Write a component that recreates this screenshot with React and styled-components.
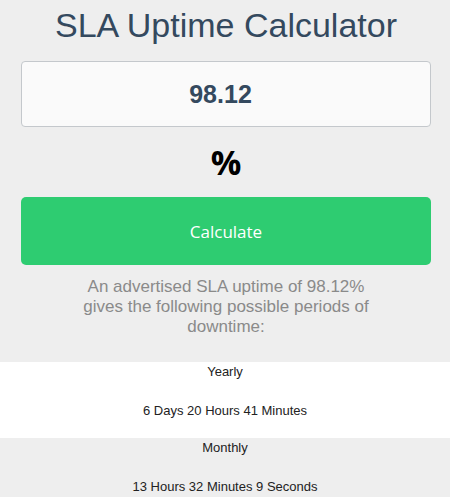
import styled, { createGlobalStyle } from "styled-components";

const GlobalStyle = createGlobalStyle`
  html, body {
    margin: 0;
    padding: 0;
    background-color: #eeeeee;
  }
  body {
    font-family: "Liberation Sans", Arial, sans-serif;
  }
`;

const Page = styled.div`
  min-height: 100vh;
  background-color: #eeeeee;
`;

const Form = styled.div`
  padding: 0 19px 0 21px;
  text-align: center;
`;

const Title = styled.h1`
  margin: 0;
  padding-top: 3px;
  font-size: 34px;
  font-weight: normal;
  line-height: 45px;
  color: #34495e;
`;

const Input = styled.div`
  margin-top: 13px;
  height: 64px;
  padding-right: 11px;
  border: 1px solid #c4c8cc;
  border-radius: 4px;
  background-color: #fafafa;
  display: flex;
  align-items: center;
  justify-content: center;
  font-size: 25px;
  font-weight: bold;
  color: #34495e;
`;

const Percent = styled.div`
  margin-top: 15px;
  font-family: "Open Sans", sans-serif;
  font-size: 34px;
  font-weight: bold;
  line-height: 40px;
  color: #000;
`;

const Button = styled.button`
  margin-top: 15px;
  width: 100%;
  height: 68px;
  border: none;
  border-radius: 5px;
  background-color: #2ecc71;
  color: #fff;
  font-family: "Open Sans", sans-serif;
  font-size: 17px;
  cursor: pointer;
`;

const Summary = styled.p`
  margin: 12px auto 0;
  max-width: 300px;
  font-size: 17px;
  line-height: 20px;
  color: #8a8a8a;
`;

const Results = styled.div`
  margin-top: 25px;
`;

const Period = styled.div`
  background-color: ${(p) => (p.$light ? "#ffffff" : "#eeeeee")};
  text-align: center;
  font-size: 13px;
  color: #222;
  height: 76px;
`;

const PeriodName = styled.div`
  padding-top: 2px;
  line-height: 16px;
`;

const PeriodValue = styled.div`
  margin-top: 23px;
  line-height: 16px;
`;

const periods = [
  { name: "Yearly", value: "6 Days 20 Hours 41 Minutes" },
  { name: "Monthly", value: "13 Hours 32 Minutes 9 Seconds" },
];

const App = () => {
  return (
    <Page>
      <GlobalStyle />
      <Form>
        <Title>SLA Uptime Calculator</Title>
        <Input>98.12</Input>
        <Percent>%</Percent>
        <Button>Calculate</Button>
        <Summary>
          An advertised SLA uptime of 98.12% gives the following possible periods of downtime:
        </Summary>
      </Form>
      <Results>
        {periods.map((p, i) => (
          <Period key={p.name} $light={i % 2 === 0}>
            <PeriodName>{p.name}</PeriodName>
            <PeriodValue>{p.value}</PeriodValue>
          </Period>
        ))}
      </Results>
    </Page>
  );
};

export default App;
